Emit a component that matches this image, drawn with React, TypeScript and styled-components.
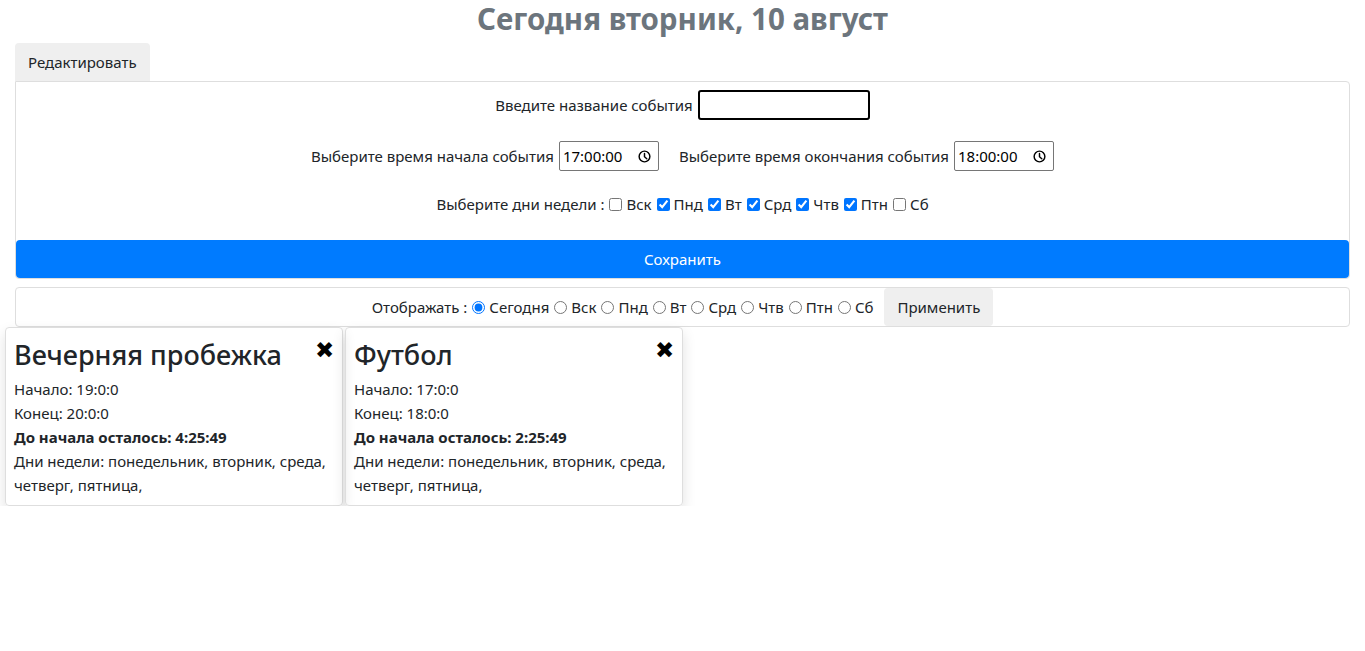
import React from "react";
import styled, { createGlobalStyle } from "styled-components";

const GlobalStyle = createGlobalStyle`
  body {
    margin: 0;
    font-family: "Noto Sans", "Open Sans", sans-serif;
    font-size: 15px;
    color: #212529;
    background: #fff;
  }
  * { box-sizing: border-box; }
`;

const days = ["Вск", "Пнд", "Вт", "Срд", "Чтв", "Птн", "Сб"];
const checkedDays = ["Пнд", "Вт", "Срд", "Чтв", "Птн"];

const events = [
  {
    title: "Вечерняя пробежка",
    start: "19:0:0",
    end: "20:0:0",
    left: "4:25:49",
    days: "понедельник, вторник, среда, четверг, пятница,",
  },
  {
    title: "Футбол",
    start: "17:0:0",
    end: "18:0:0",
    left: "2:25:49",
    days: "понедельник, вторник, среда, четверг, пятница,",
  },
];

function ClockIcon() {
  return (
    <svg width="13" height="13" viewBox="0 0 16 16" fill="none" stroke="#000" strokeWidth="1.8">
      <circle cx="8" cy="8" r="6.6" />
      <path d="M8 4.2V8.3l2.8 2.4" strokeLinecap="round" strokeLinejoin="round" />
    </svg>
  );
}

function TimeField({ value }: { value: string }) {
  return (
    <TimeBox>
      <span>{value}</span>
      <ClockIcon />
    </TimeBox>
  );
}

export default function App() {
  return (
    <>
      <GlobalStyle />
      <Page>
        <Title>Сегодня вторник, 10 август</Title>
        <Section>
          <TabButton>Редактировать</TabButton>
          <Panel>
            <FormRow $after={21}>
              <label>Введите название события</label>
              <TextInput type="text" autoFocus />
            </FormRow>
            <FormRow $after={18}>
              <label>Выберите время начала события</label>
              <TimeField value="17:00:00" />
              <Spacer />
              <label>Выберите время окончания события</label>
              <TimeField value="18:00:00" />
            </FormRow>
            <FormRow $after={21}>
              <label>Выберите дни недели :</label>
              {days.map((d) => (
                <Option key={d}>
                  <input type="checkbox" defaultChecked={checkedDays.includes(d)} />
                  {d}
                </Option>
              ))}
            </FormRow>
            <SaveButton>Сохранить</SaveButton>
          </Panel>
          <FilterPanel>
            <span>Отображать :</span>
            <Option>
              <input type="radio" name="show" defaultChecked />
              Сегодня
            </Option>
            {days.map((d) => (
              <Option key={d}>
                <input type="radio" name="show" />
                {d}
              </Option>
            ))}
            <ApplyButton>Применить</ApplyButton>
          </FilterPanel>
        </Section>
        <Cards>
          {events.map((e) => (
            <Card key={e.title}>
              <CardHead>
                <CardTitle>{e.title}</CardTitle>
                <Close>✖</Close>
              </CardHead>
              <Line>Начало: {e.start}</Line>
              <Line>Конец: {e.end}</Line>
              <Line $bold>До начала осталось: {e.left}</Line>
              <Line>Дни недели: {e.days}</Line>
            </Card>
          ))}
        </Cards>
      </Page>
    </>
  );
}

const Page = styled.div`
  padding-top: 1px;
`;

const Title = styled.h1`
  margin: 0 0 6px;
  text-align: center;
  font-size: 29.5px;
  line-height: 36px;
  font-weight: 700;
  color: #6c757d;
`;

const Section = styled.div`
  padding: 0 15px;
`;

const TabButton = styled.button`
  display: block;
  height: 38px;
  padding: 0 13px;
  border: none;
  border-radius: 4px 4px 0 0;
  background: #efefef;
  font-family: inherit;
  font-size: 15px;
  color: #212529;
`;

const Panel = styled.div`
  border: 1px solid #dedede;
  border-radius: 0 4px 4px 4px;
  padding-top: 8px;
`;

const FormRow = styled.div<{ $after: number }>`
  display: flex;
  justify-content: center;
  align-items: center;
  gap: 5px;
  height: 30px;
  margin-bottom: ${({ $after }) => $after}px;
`;

const Spacer = styled.span`
  width: 10px;
`;

const TextInput = styled.input`
  width: 172px;
  height: 30px;
  border: 2px solid #000;
  border-radius: 3px;
  outline: none;
`;

const TimeBox = styled.div`
  width: 100px;
  height: 30px;
  display: flex;
  align-items: center;
  justify-content: space-between;
  padding: 0 7px 0 3px;
  border: 1px solid #767676;
  border-radius: 2px;
  font-size: 15px;
  color: #000;
`;

const Option = styled.label`
  display: inline-flex;
  align-items: center;
  gap: 4px;
  input {
    margin: 0;
    width: 13px;
    height: 13px;
  }
`;

const SaveButton = styled.button`
  display: block;
  width: 100%;
  height: 38px;
  border: none;
  border-radius: 4px;
  background: #007bff;
  color: #fff;
  font-family: inherit;
  font-size: 15px;
`;

const FilterPanel = styled.div`
  margin-top: 8px;
  height: 40px;
  border: 1px solid #dedede;
  border-radius: 4px;
  display: flex;
  justify-content: center;
  align-items: center;
  gap: 5px;
`;

const ApplyButton = styled.button`
  height: 38px;
  margin-left: 6px;
  padding: 0 13px;
  border: none;
  border-radius: 4px;
  background: #efefef;
  font-family: inherit;
  font-size: 15px;
  color: #212529;
`;

const Cards = styled.div`
  display: flex;
  gap: 2px;
  padding: 0 5px;
`;

const Card = styled.div`
  width: 338px;
  padding: 8px 8px 8px;
  border: 1px solid #dedede;
  border-radius: 4px;
  box-shadow: 0 6px 14px rgba(0, 0, 0, 0.12);
`;

const CardHead = styled.div`
  display: flex;
  justify-content: space-between;
  align-items: flex-start;
`;

const CardTitle = styled.h2`
  margin: 0 0 3px;
  font-size: 27px;
  line-height: 38px;
  font-weight: 500;
`;

const Close = styled.span`
  font-size: 23px;
  line-height: 22px;
  color: #000;
  margin-top: 2px;
`;

const Line = styled.div<{ $bold?: boolean }>`
  font-size: 15px;
  line-height: 24px;
  font-weight: ${({ $bold }) => ($bold ? 700 : 400)};
`;
